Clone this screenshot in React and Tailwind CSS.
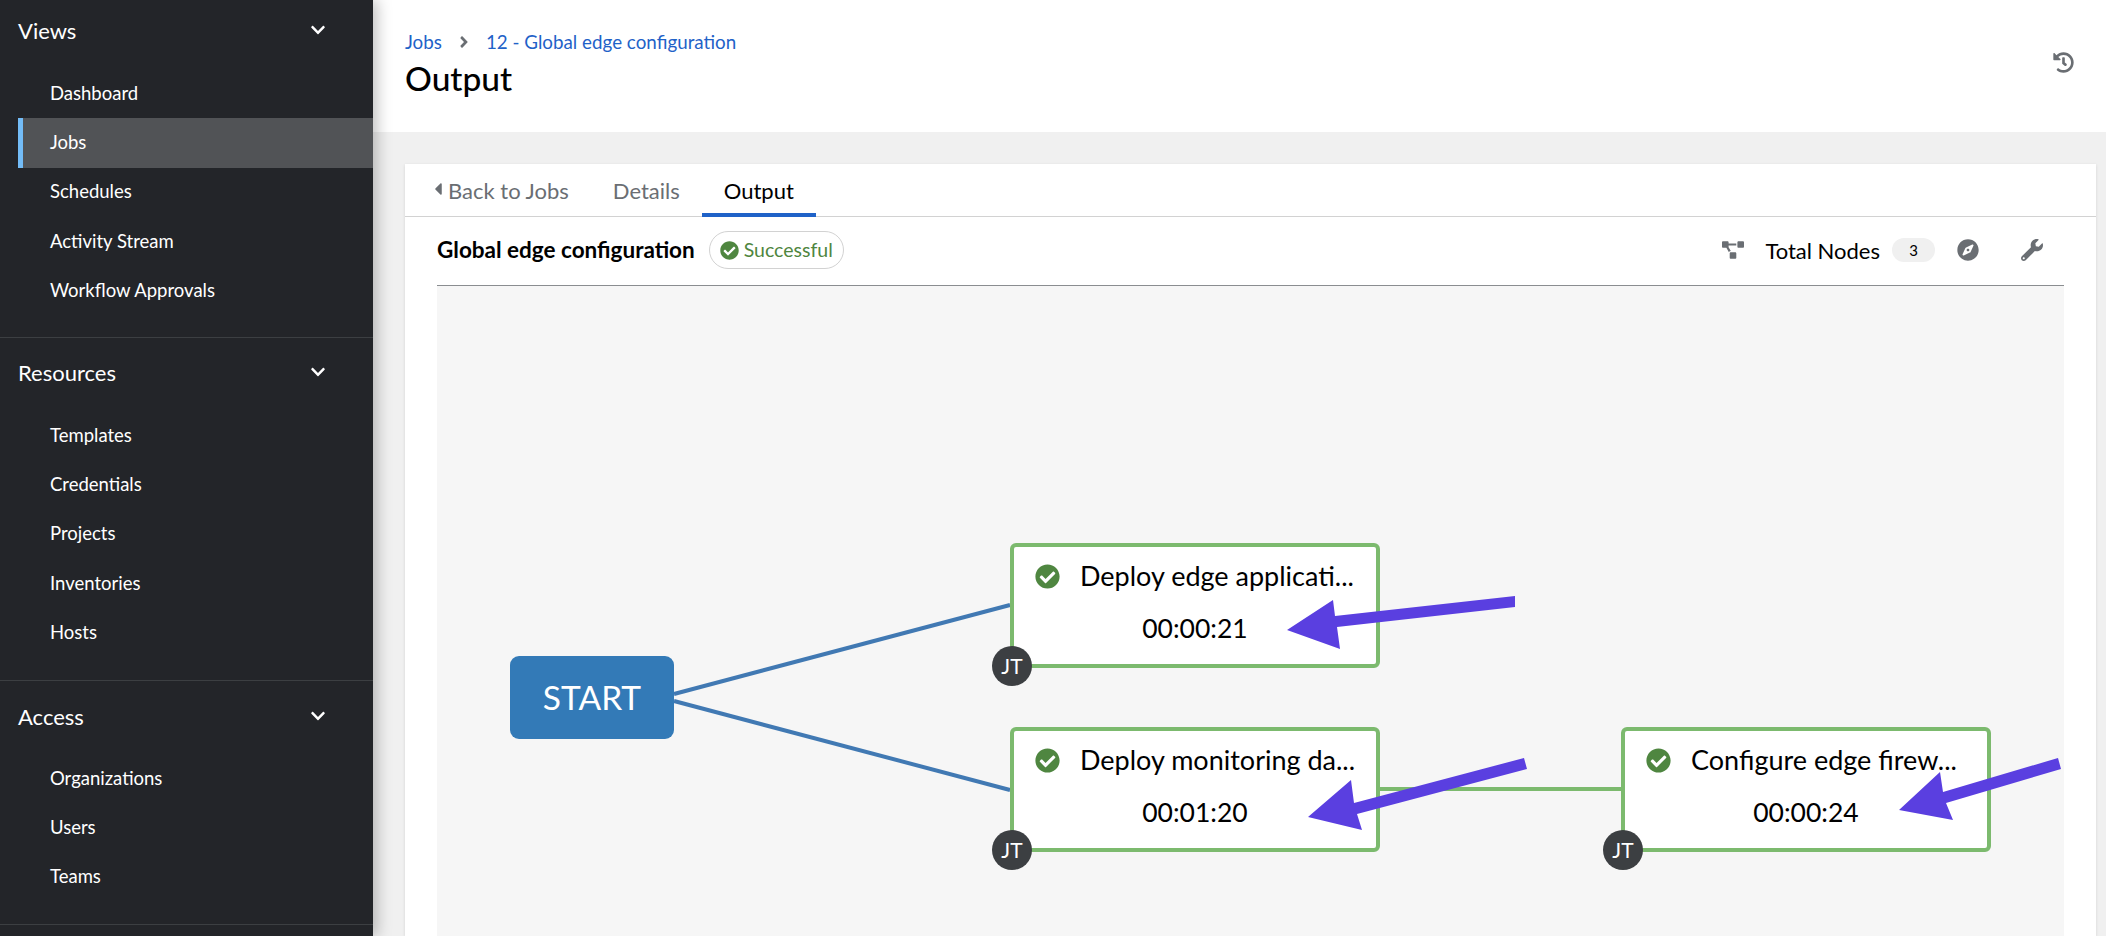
import React from "react";
import { FaAngleRight, FaCaretLeft, FaCheckCircle, FaCompass, FaHistory, FaProjectDiagram, FaWrench, FaChevronDown } from "react-icons/fa";

const sections = [
  { title: "Views", cls: "h-[338px] pt-[5px]", listCls: "mt-[14px]", items: ["Dashboard", "Jobs", "Schedules", "Activity Stream", "Workflow Approvals"] },
  { title: "Resources", cls: "h-[343px] pt-[9px]", listCls: "mt-[14px]", items: ["Templates", "Credentials", "Projects", "Inventories", "Hosts"] },
  { title: "Access", cls: "h-[244px] pt-[10px]", listCls: "mt-[13px]", items: ["Organizations", "Users", "Teams"] },
];

function Section({ title, items, cls, listCls }) {
  return (
    <div className={"border-b border-[#3c3f42] shrink-0 " + cls}>
      <div className="h-[50px] pl-[18px] pr-[47px] flex items-center justify-between text-[22px] text-white">
        <span>{title}</span>
        <FaChevronDown className="text-[16px]" />
      </div>
      <div className={"pl-[18px] " + listCls}>
        {items.map((it) => (
          <div
            key={it}
            className={
              it === "Jobs"
                ? "h-[49.3px] flex items-center border-l-[5px] border-[#73bcf7] bg-[#515356] pl-[27px] text-[18.5px] text-white"
                : "h-[49.3px] flex items-center pl-[32px] text-[18.5px] text-white"
            }
          >
            {it}
          </div>
        ))}
      </div>
    </div>
  );
}

function Node({ className, name, time }) {
  return (
    <div className={"absolute w-[370px] h-[125px] bg-white border-[4px] border-[#7cba6e] rounded-[6px] " + className}>
      <div className="flex items-center pl-[21px] h-[58px]">
        <FaCheckCircle className="text-[25px] text-[#4f8640] shrink-0" />
        <span className="ml-[20px] text-[27px] text-black whitespace-nowrap">{name}</span>
      </div>
      <div className="text-center text-[26.5px] text-black leading-[34px] mt-[6px]">{time}</div>
      <div className="absolute left-[-22px] bottom-[-22px] w-[40px] h-[40px] rounded-full bg-[#3c3f42] text-white text-[21px] flex items-center justify-center">
        JT
      </div>
    </div>
  );
}

export default function App() {
  return (
    <div className="flex h-[936px] w-[2106px] overflow-hidden font-['Lato','Noto_Sans',sans-serif] bg-[#f0f0f0]">
      <aside className="w-[373px] shrink-0 bg-[#232529] flex flex-col overflow-hidden z-10 shadow-[4px_0_14px_rgba(0,0,0,0.25)]">
        {sections.map((s) => (
          <Section key={s.title} {...s} />
        ))}
      </aside>
      <div className="flex-1 min-w-0 flex flex-col">
        <header className="h-[132px] shrink-0 bg-white pl-[32px] pr-[32px] flex justify-between">
          <div className="pt-[30px]">
            <div className="flex items-center text-[18.8px] text-[#1f62c8] leading-[24px]">
              <span>Jobs</span>
              <FaAngleRight className="mx-[13px] text-[18px] text-[#6a6e73]" />
              <span>12 - Global edge configuration</span>
            </div>
            <h1 className="text-[33.5px] font-medium text-black leading-[40px] mt-[4px]">Output</h1>
          </div>
          <FaHistory className="mt-[52px] text-[21px] text-[#6a6e73]" />
        </header>
        <main className="flex-1 min-h-0 pt-[32px] pl-[32px] pr-[10px]">
          <section className="h-full bg-white flex flex-col shadow-[0_1px_3px_rgba(0,0,0,0.12)]">
            <nav className="h-[53px] shrink-0 border-b border-[#d2d2d2] flex items-stretch pl-[22px] text-[22px] text-[#6a6e73]">
              <div className="flex items-center pl-[1px] pr-[22px]">
                <FaCaretLeft className="text-[20px] mb-[2px]" />
                <span>Back to Jobs</span>
              </div>
              <div className="flex items-center px-[22px]">Details</div>
              <div className="flex items-center px-[22px] text-black border-b-[4px] border-[#1f62c8] pt-[4px] mb-[-1px]">Output</div>
            </nav>
            <div className="flex-1 min-h-0 px-[32px] flex flex-col">
              <div className="h-[69px] shrink-0 border-b border-[#8a8d90] pb-[2px] flex items-center justify-between">
                <div className="flex items-center">
                  <span className="text-[22.5px] font-bold text-black">Global edge configuration</span>
                  <span className="ml-[14px] h-[38px] w-[135px] rounded-full border border-[#d2d2d2] flex items-center justify-center text-[19.5px] text-[#4f8640]">
                    <FaCheckCircle className="text-[19px] mr-[5px]" />
                    Successful
                  </span>
                </div>
                <div className="flex items-center mr-[21px]">
                  <FaProjectDiagram className="text-[22px] text-[#6a6e73]" />
                  <span className="ml-[21px] text-[22px] text-black">Total Nodes</span>
                  <span className="ml-[12px] w-[43px] h-[24px] rounded-full bg-[#f0f0f0] text-[15px] text-black flex items-center justify-center">3</span>
                  <FaCompass className="ml-[22px] text-[22px] text-[#6a6e73]" />
                  <FaWrench className="ml-[42px] text-[22px] text-[#6a6e73]" />
                </div>
              </div>
              <div className="relative flex-1 min-h-0 bg-[#f6f6f6]">
                <svg className="absolute left-0 top-0 w-[1627px] h-[650px]" viewBox="437 286 1627 650">
                  <line x1="674" y1="694" x2="1010" y2="605" stroke="#4179b3" strokeWidth="4" />
                  <line x1="674" y1="701" x2="1010" y2="790" stroke="#4179b3" strokeWidth="4" />
                  <line x1="1380" y1="789" x2="1621" y2="789" stroke="#7cba6e" strokeWidth="4" />
                </svg>
                <div className="absolute left-[73px] top-[370px] w-[164px] h-[83px] rounded-[9px] bg-[#337ab7] text-white text-[33.5px] flex items-center justify-center">
                  START
                </div>
                <Node className="left-[573px] top-[257px]" name="Deploy edge applicati..." time="00:00:21" />
                <Node className="left-[573px] top-[441px]" name="Deploy monitoring da..." time="00:01:20" />
                <Node className="left-[1184px] top-[441px]" name="Configure edge firew..." time="00:00:24" />
                <svg className="absolute left-0 top-0 w-[1627px] h-[650px] pointer-events-none" viewBox="437 286 1627 650" fill="#5a3fe0">
                  <polygon points="1515,596 1515,607 1337,627 1340,649 1287,630 1333,600 1335,616" />
                  <polygon points="1524,758 1527,769 1357,814 1362,830 1308,817 1351,780 1354,803" />
                  <polygon points="2058,758 2061,769 1946,803 1953,820 1899,810 1940,772 1943,792" />
                </svg>
              </div>
            </div>
          </section>
        </main>
      </div>
    </div>
  );
}
